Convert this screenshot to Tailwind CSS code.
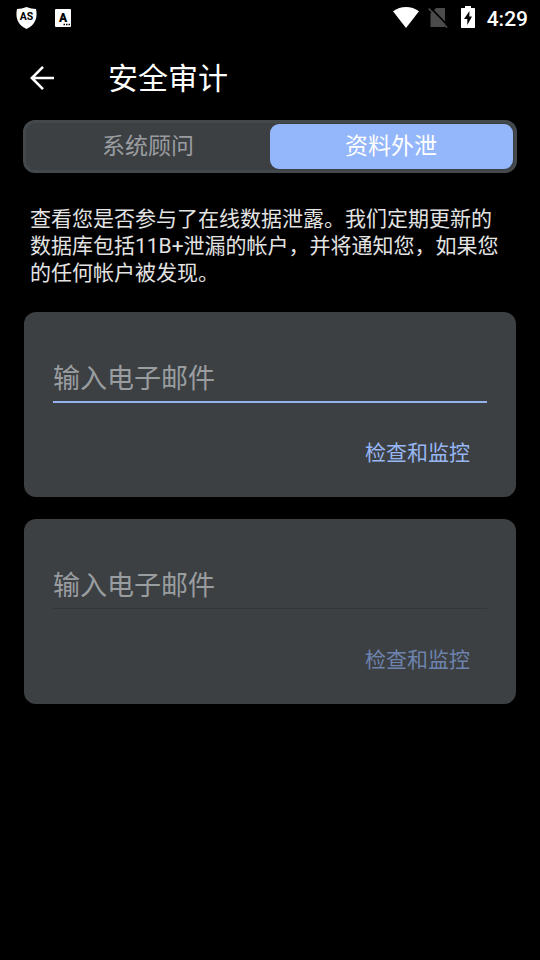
<!DOCTYPE html>
<html lang="zh-CN">
<head>
<meta charset="utf-8">
<meta name="viewport" content="width=device-width, initial-scale=1">
<title>安全审计</title>
<script src="https://cdn.jsdelivr.net/npm/@tailwindcss/browser@4"></script>
</head>
<body class="bg-black">
<div class="flex h-[960px] w-[540px] flex-col overflow-hidden bg-black font-[Roboto,'Noto_Sans_CJK_SC',sans-serif] text-white">
  <div class="flex h-9 shrink-0 items-center justify-between pr-3 pl-4">
    <div class="flex items-center gap-[18px]">
      <svg class="h-[22px] w-[21px]" viewBox="0 0 21 22">
        <path d="M10.5 0C13.5 1.3 17 1.8 20 2C21.5 9 20.5 17.500 10.500 22C.5 17.500 -.5 9 1 2C4 1.800 7.500 1.300 10.500 0Z" fill="#fff"/>
        <text x="10.500" y="13.300" text-anchor="middle" font-family="Roboto, sans-serif" font-weight="700" font-size="10.500" fill="#000">AS</text>
      </svg>
      <svg class="h-[18px] w-4" viewBox="0 0 16 18">
        <rect width="16" height="18" rx="1" fill="#fff"/>
        <text x="8" y="13" text-anchor="middle" font-family="Roboto, sans-serif" font-weight="900" font-size="12" fill="#000">A</text>
        <path d="M8.500 15.500h1.500M11 15.500h1.500M13.500 15.500h1.500" stroke="#000" stroke-width="1.500"/>
      </svg>
    </div>
    <div class="flex items-center">
      <svg class="mb-0.5 h-[21px] w-[26px]" viewBox="0 0 26 21">
        <path d="M0 4.300C7.500 -1.400 18.500 -1.400 26 4.300L13 21Z" fill="#fff"/>
      </svg>
      <svg class="ml-[9px] h-[22px] w-5" viewBox="0 0 20 22">
        <path d="M8 1H17V19L16 20H2.500V6.500Z" fill="#4b4b4b"/>
        <path d="M2.200 .4L20.200 18.900" stroke="#000" stroke-width="1.800"/>
        <path d="M.7 1.500L19 20.500" stroke="#4b4b4b" stroke-width="1.800"/>
      </svg>
      <svg class="mb-0.5 ml-[13px] h-[22px] w-[14px]" viewBox="0 0 14 22">
        <path d="M4 0h6v2h3.200q.8 0 .8.800v18.400q0 .8-.8.800H.8q-.8 0-.8-.8V2.800Q0 2 .8 2H4Z" fill="#fff"/>
        <path d="M8.500 5L3 13H6.300V19L11 10.500H8.300Z" fill="#000"/>
      </svg>
      <span class="ml-3 pt-0.5 text-[21px] leading-6 font-medium">4:29</span>
    </div>
  </div>

  <header class="flex h-[84px] shrink-0 items-center pl-[29px]">
    <svg class="h-6 w-[25px]" viewBox="0 0 25 24" fill="none" stroke="#fff" stroke-width="2.600">
      <path d="M25 12H2.500M14 .9L2.900 12L14 23.100"/>
    </svg>
    <h1 class="ml-[54px] pt-0.5 text-[30px] leading-9">安全审计</h1>
  </header>

  <nav class="mx-[23px] flex h-[53px] shrink-0 rounded-xl border-[3px] border-[#43484d] bg-[#3c4043] p-px text-[23px]">
    <div class="flex w-[243px] items-center justify-center pt-0.5 pr-px text-[#9a9da0]">系统顾问</div>
    <div class="flex flex-1 items-center justify-center rounded-[9px] bg-[#94b6fb] pt-0.5 pr-px">资料外泄</div>
  </nav>

  <p class="mt-[33px] ml-[30px] w-[480px] shrink-0 text-[21px] leading-[27px] text-[#e3e3e3]">查看您是否参与了在线数据泄露。我们定期更新的<br>数据库包括11B+泄漏的帐户，并将通知您，如果您<br>的任何帐户被发现。</p>

  <main class="mt-[25px] flex flex-col gap-[22px] px-6">
    <section class="flex h-[185px] flex-col rounded-xl bg-[#3c4043] px-[29px]">
      <div class="h-[91px] border-b-2 border-[#94b2f0] pt-[47px] text-[27px] leading-10 text-[#9a9da0]">输入电子邮件</div>
      <div class="mt-[34px] mr-[17px] self-end text-[21px] leading-8 text-[#98b6f3]">检查和监控</div>
    </section>
    <section class="flex h-[185px] flex-col rounded-xl bg-[#3c4043] px-[29px]">
      <div class="h-[90px] border-b border-[#33373a] pt-[47px] text-[27px] leading-10 text-[#9a9da0]">输入电子邮件</div>
      <div class="mt-[35px] mr-[17px] self-end text-[21px] leading-8 text-[#6d83ad]">检查和监控</div>
    </section>
  </main>
</div>
</body>
</html>
